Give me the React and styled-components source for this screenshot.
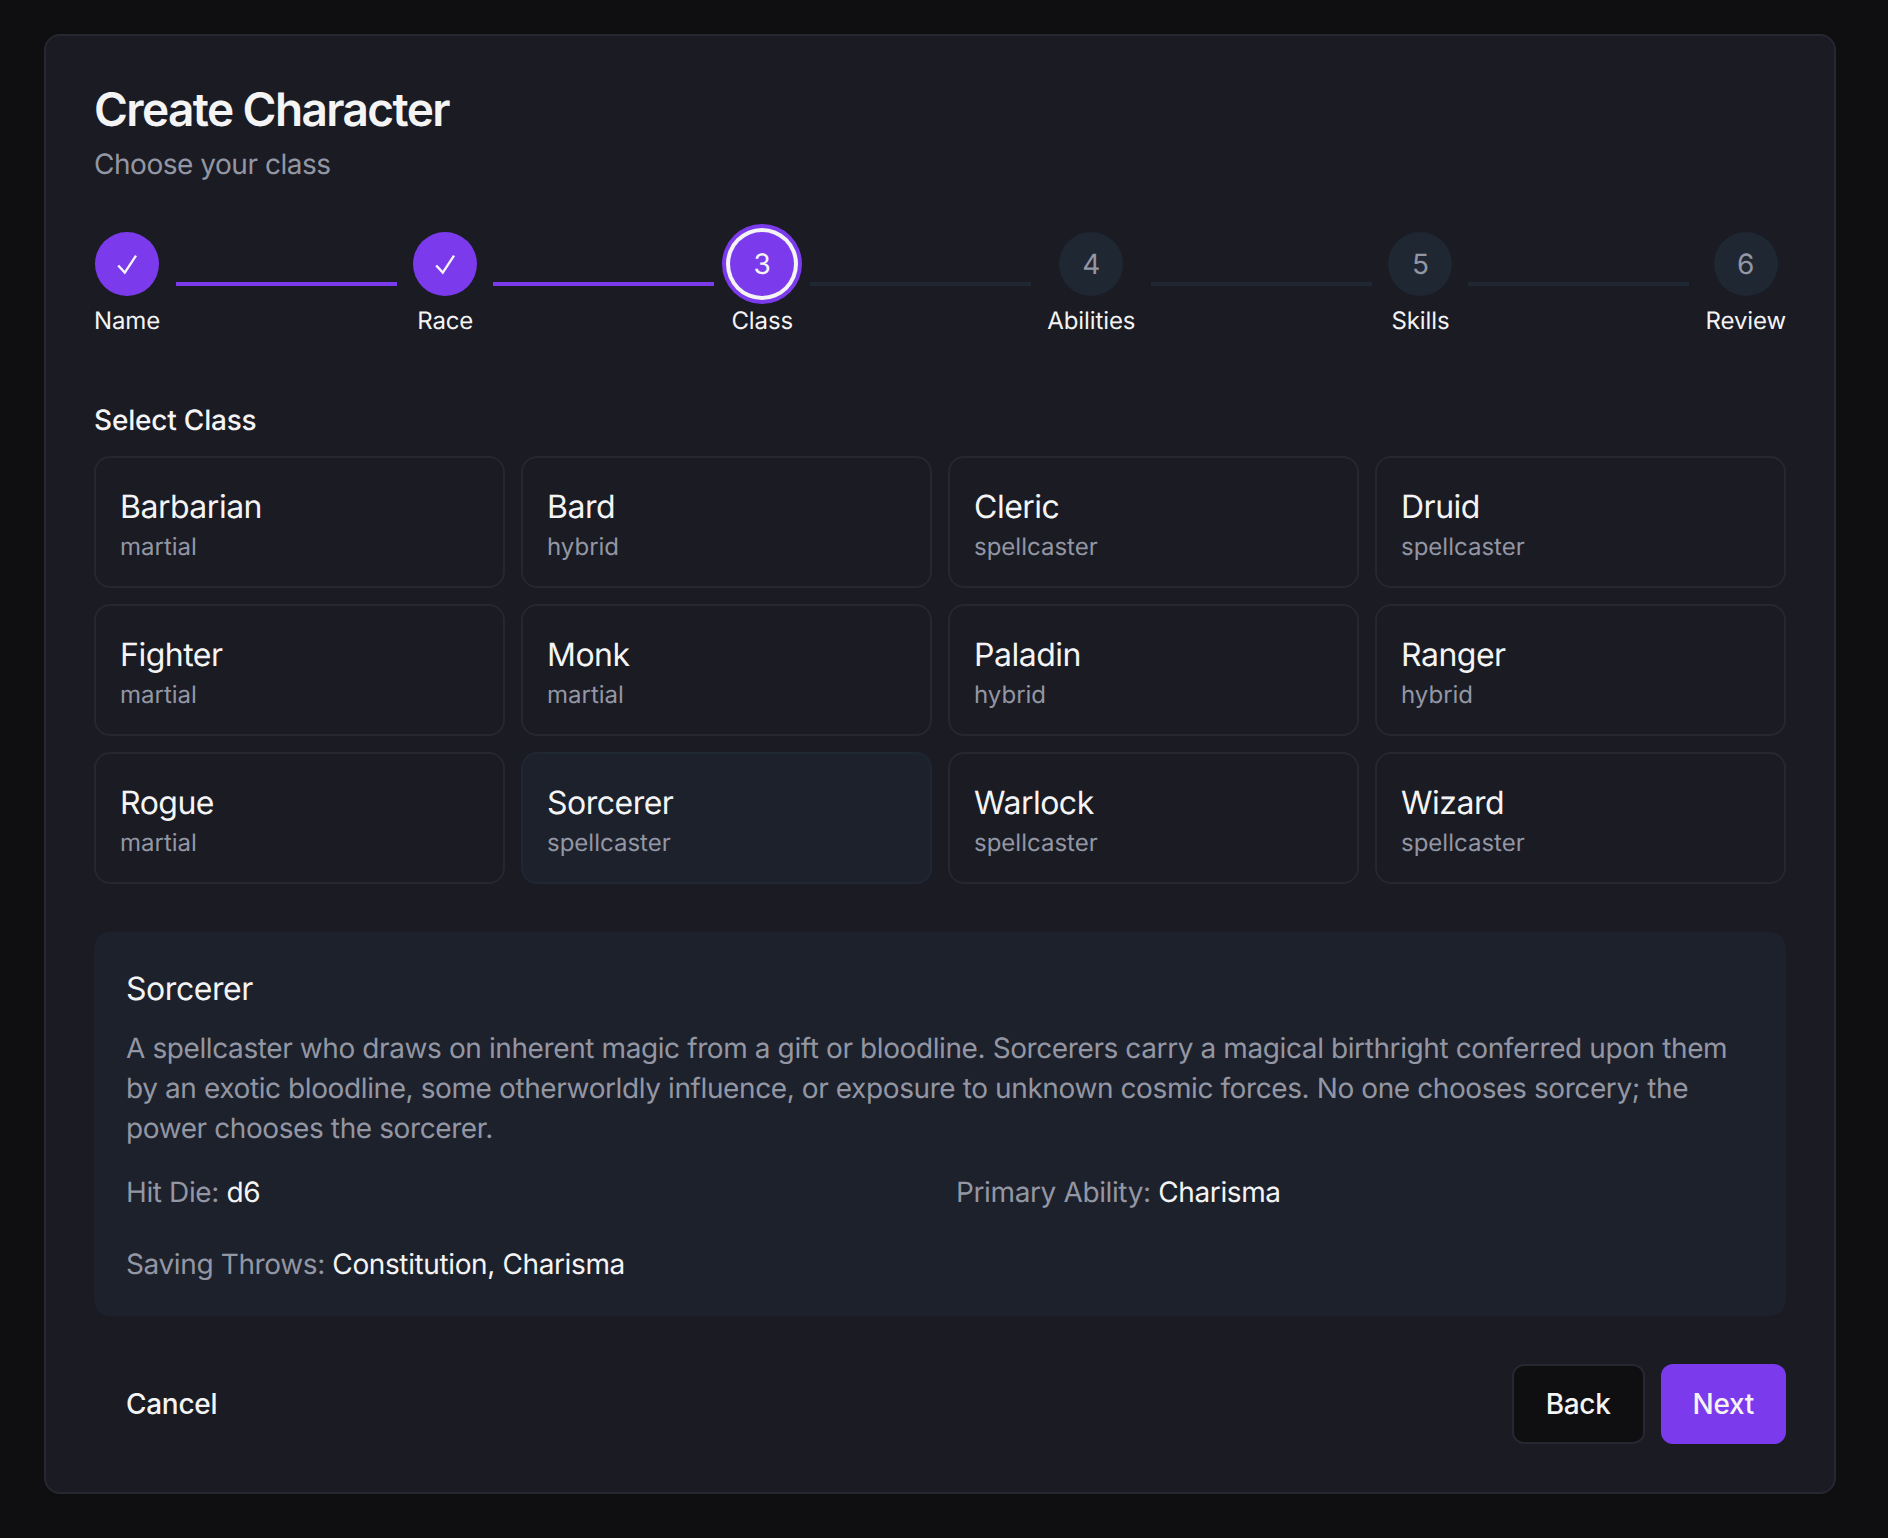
import React from 'react';
import styled, { createGlobalStyle } from 'styled-components';

const GlobalStyle = createGlobalStyle`
  *, *::before, *::after {
    box-sizing: border-box;
  }

  html, body {
    margin: 0;
    padding: 0;
    background: #0f0f11;
  }

  body {
    font-family: Inter, "Liberation Sans", sans-serif;
    text-rendering: geometricPrecision;
    color: #f4f4f5;
  }
`;

const Page = styled.div`
  width: 1888px;
  height: 1538px;
  padding: 34px 0 0 44px;
  overflow: hidden;
`;

const Panel = styled.div`
  width: 1792px;
  padding: 48px;
  background: #1a1b23;
  border: 2px solid #262731;
  border-radius: 16px;
`;

const Title = styled.h1`
  margin: 0;
  font-size: 46px;
  line-height: 52px;
  font-weight: 600;
  letter-spacing: -1.6px;
  color: #f4f4f5;
`;

const Subtitle = styled.p`
  margin: 8px 0 0;
  font-size: 28px;
  line-height: 40px;
  letter-spacing: -0.47px;
  color: #9396a3;
`;

const Stepper = styled.div`
  display: flex;
  align-items: center;
  margin-top: 48px;
`;

const Step = styled.div`
  display: flex;
  flex-direction: column;
  align-items: center;
`;

const Circle = styled.div`
  width: 64px;
  height: 64px;
  display: flex;
  align-items: center;
  justify-content: center;
  border-radius: 50%;
  font-size: 28px;
  line-height: 40px;
  background: ${(p) => (p.$state === 'todo' ? '#1f2733' : '#7c3aed')};
  color: ${(p) => (p.$state === 'todo' ? '#9396a3' : '#f4f4f5')};
  box-shadow: ${(p) =>
    p.$state === 'current' ? '0 0 0 4px #f4f4f5, 0 0 0 8px #7c3aed' : 'none'};
`;

const StepLabel = styled.span`
  margin: 9px 0 -1px;
  font-size: 24px;
  line-height: 32px;
  letter-spacing: -0.1px;
  color: #f4f4f5;
`;

const Connector = styled.div`
  flex: 1;
  height: 4px;
  margin: 0 16px;
  background: ${(p) => (p.$done ? '#7c3aed' : '#1f2733')};
`;

const SectionTitle = styled.h2`
  margin: 64px 0 16px;
  font-size: 28px;
  line-height: 40px;
  font-weight: 450;
  letter-spacing: -0.2px;
  color: #f4f4f5;
`;

const ClassGrid = styled.div`
  display: grid;
  grid-template-columns: repeat(4, 1fr);
  gap: 16px;
`;

const ClassCard = styled.div`
  padding: 25px 24px 23px;
  border: 2px solid ${(p) => (p.$selected ? '#1f2733' : '#262731')};
  border-radius: 16px;
  background: ${(p) => (p.$selected ? '#1c212c' : 'transparent')};
`;

const ClassName = styled.div`
  font-size: 32px;
  line-height: 48px;
  font-weight: 430;
  letter-spacing: -0.5px;
  color: #f4f4f5;
`;

const ClassKind = styled.div`
  font-size: 24px;
  line-height: 32px;
  color: #9396a3;
`;

const Details = styled.section`
  margin-top: 48px;
  padding: 32px;
  background: #1d212c;
  border-radius: 16px;
`;

const DetailsName = styled.h3`
  margin: 1px 0 -1px;
  font-size: 32px;
  line-height: 48px;
  font-weight: 430;
  letter-spacing: -0.45px;
  color: #f4f4f5;
`;

const DetailsText = styled.p`
  margin: 16px 0 0;
  font-size: 28px;
  line-height: 40px;
  letter-spacing: -0.4px;
  color: #9396a3;
`;

const Facts = styled.div`
  display: grid;
  grid-template-columns: repeat(2, 1fr);
  gap: 32px;
  margin-top: 24px;
`;

const Fact = styled.div`
  font-size: 28px;
  line-height: 40px;
  letter-spacing: -0.38px;
  color: #9396a3;

  span {
    color: #f4f4f5;
  }
`;

const Footer = styled.div`
  display: flex;
  justify-content: space-between;
  align-items: center;
  margin-top: 48px;
`;

const Actions = styled.div`
  display: flex;
  gap: 16px;
`;

const variants = {
  ghost: 'background: transparent;',
  outline: 'background: #0f0f11; border: 2px solid #262731;',
  primary: 'background: #7c3aed;',
};

const Button = styled.button`
  height: 80px;
  padding: 0 32px;
  border: none;
  border-radius: 12px;
  font-family: inherit;
  font-size: 28px;
  font-weight: 450;
  letter-spacing: -0.3px;
  color: #f4f4f5;
  ${(p) => variants[p.$variant]}
`;

const CheckMark = () => (
  <svg width="24" height="24" viewBox="0 0 24 24" fill="none" stroke="#f4f4f5" strokeWidth="2.4">
    <path d="M3.2 13.5 L9.8 20.6 L21 3.6" />
  </svg>
);

const steps = ['Name', 'Race', 'Class', 'Abilities', 'Skills', 'Review'];
const currentStep = 2;

const classes = [
  ['Barbarian', 'martial'],
  ['Bard', 'hybrid'],
  ['Cleric', 'spellcaster'],
  ['Druid', 'spellcaster'],
  ['Fighter', 'martial'],
  ['Monk', 'martial'],
  ['Paladin', 'hybrid'],
  ['Ranger', 'hybrid'],
  ['Rogue', 'martial'],
  ['Sorcerer', 'spellcaster'],
  ['Warlock', 'spellcaster'],
  ['Wizard', 'spellcaster'],
];

const stepState = (i) => {
  if (i < currentStep) return 'done';
  return i === currentStep ? 'current' : 'todo';
};

const App = () => (
  <Page>
    <GlobalStyle />
    <Panel>
      <Title>Create Character</Title>
      <Subtitle>Choose your class</Subtitle>
      <Stepper>
        {steps.map((name, i) => (
          <React.Fragment key={name}>
            <Step>
              <Circle $state={stepState(i)}>
                {i < currentStep ? <CheckMark /> : i + 1}
              </Circle>
              <StepLabel>{name}</StepLabel>
            </Step>
            {i < steps.length - 1 && <Connector $done={i < currentStep} />}
          </React.Fragment>
        ))}
      </Stepper>
      <SectionTitle>Select Class</SectionTitle>
      <ClassGrid>
        {classes.map(([name, kind]) => (
          <ClassCard key={name} $selected={name === 'Sorcerer'}>
            <ClassName>{name}</ClassName>
            <ClassKind>{kind}</ClassKind>
          </ClassCard>
        ))}
      </ClassGrid>
      <Details>
        <DetailsName>Sorcerer</DetailsName>
        <DetailsText>
          A spellcaster who draws on inherent magic from a gift or bloodline. Sorcerers carry a
          magical birthright conferred upon them by an exotic bloodline, some otherworldly
          influence, or exposure to unknown cosmic forces. No one chooses sorcery; the power
          chooses the sorcerer.
        </DetailsText>
        <Facts>
          <Fact>
            Hit Die: <span>d6</span>
          </Fact>
          <Fact>
            Primary Ability: <span>Charisma</span>
          </Fact>
          <Fact>
            Saving Throws: <span>Constitution, Charisma</span>
          </Fact>
        </Facts>
      </Details>
      <Footer>
        <Button $variant="ghost">Cancel</Button>
        <Actions>
          <Button $variant="outline">Back</Button>
          <Button $variant="primary">Next</Button>
        </Actions>
      </Footer>
    </Panel>
  </Page>
);

export default App;
